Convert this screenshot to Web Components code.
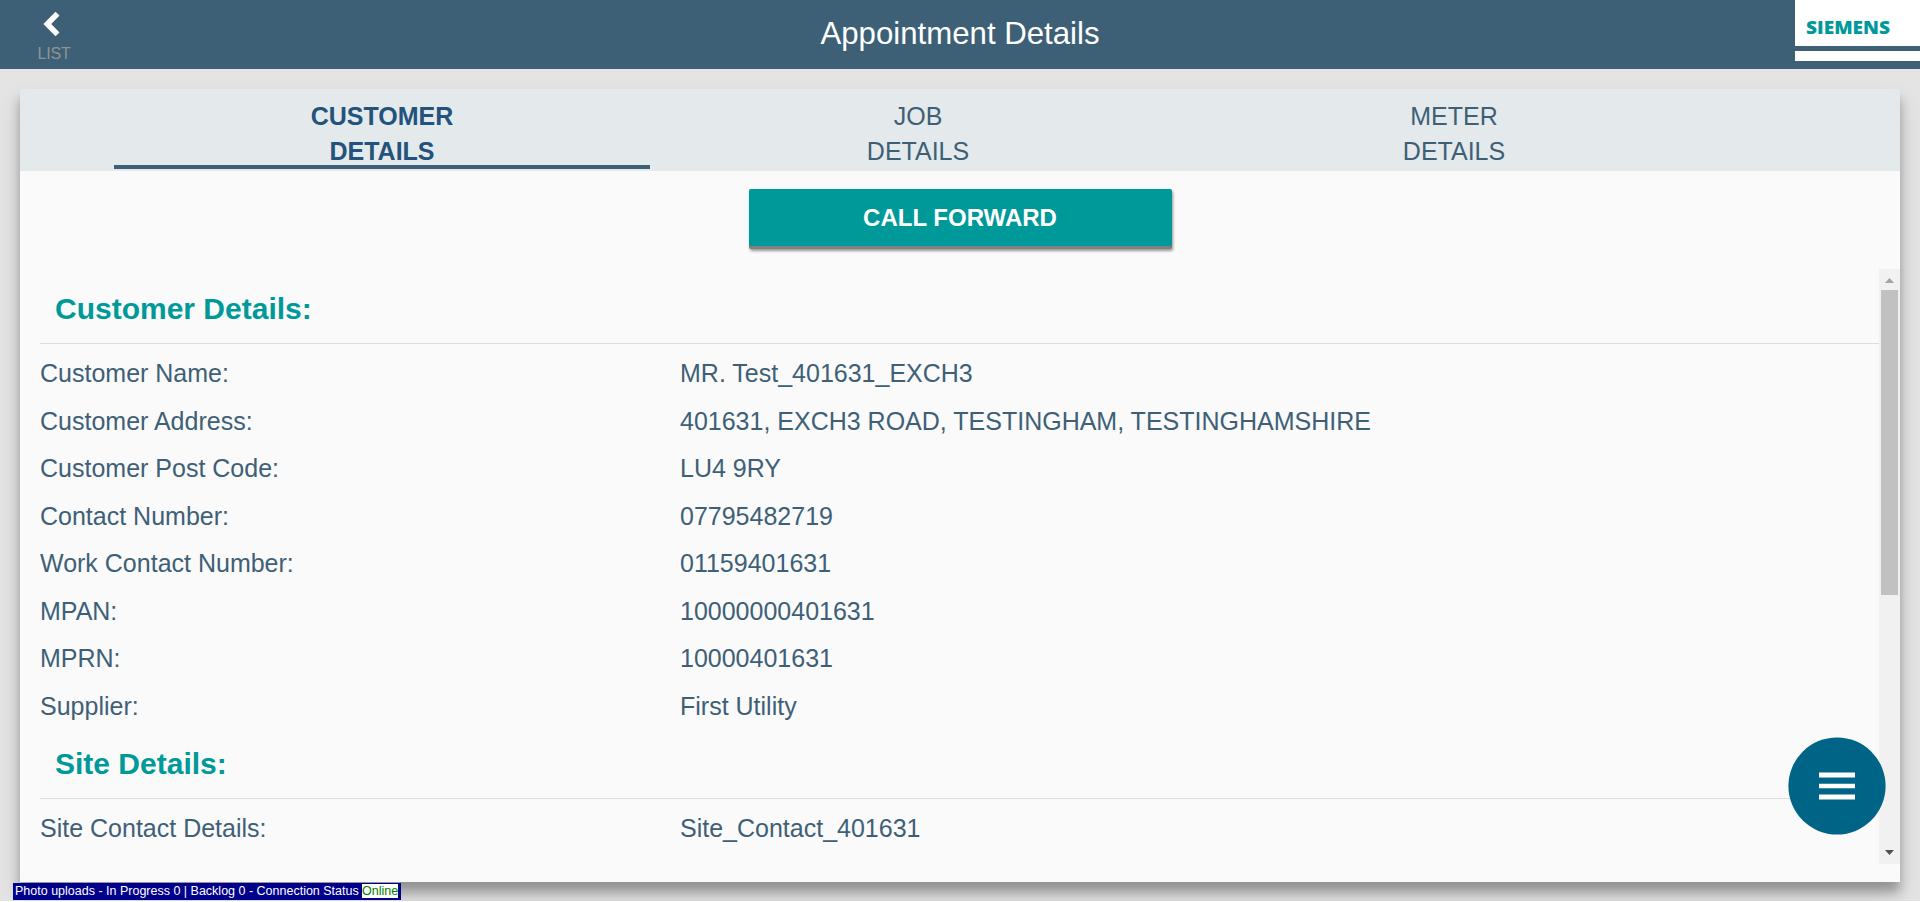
<!DOCTYPE html>
<html lang="en">
<head>
<meta charset="utf-8">
<title>Appointment Details</title>
<style>
html,body{margin:0;height:100%;overflow:hidden}
body{font-family:"Liberation Sans",Arial,sans-serif;color:#3e6077;background:#fff}
</style>
</head>
<body>
<appointment-page></appointment-page>
<script>
function define(name, html) {
  const t = document.createElement('template');
  t.innerHTML = html;
  customElements.define(name, class extends HTMLElement {
    constructor() {
      super();
      this.attachShadow({ mode: 'open' }).appendChild(t.content.cloneNode(true));
    }
  });
}

define('brand-logo', `
<style>
:host{display:flex;flex-direction:column;width:125px;height:61px}
.name{box-sizing:border-box;height:46px;background:#fff;padding:8px 0 0 11px;color:#099;line-height:38px}
svg{display:block;overflow:visible}
text{font:800 17.5px "Open Sans","Noto Sans",sans-serif;fill:#099}
.bar{margin-top:5px;height:10px;background:#fff}
</style>
<div class="name"><svg width="84" height="30"><text x="0" y="25.6" textLength="84" lengthAdjust="spacingAndGlyphs">SIEMENS</text></svg></div>
<div class="bar"></div>`);

define('app-header', `
<style>
:host{display:grid;grid-template-columns:1fr auto 1fr;height:69px;background:#3e6077;color:#fff}
.back{width:108px;display:flex;flex-direction:column;align-items:center}
.back svg{display:block;margin-top:11px;margin-right:4px}
.back span{font-size:16px;line-height:20px;margin-top:7px;color:#8e9492;letter-spacing:-.2px}
h1{margin:0;font-size:31.2px;font-weight:400;line-height:68px}
brand-logo{justify-self:end}
</style>
<div class="back"><svg width="18" height="26" viewBox="0 0 18 26"><path d="M14.5 2.6 L4.3 13 L14.5 23.4" fill="none" stroke="#fff" stroke-width="5.6"/></svg><span>LIST</span></div>
<h1><slot></slot></h1>
<brand-logo></brand-logo>`);

define('tab-item', `
<style>
:host{display:block;box-sizing:border-box;width:536px;height:80px;padding-top:10px;text-align:center;font-size:25px;line-height:35px;border-bottom:4px solid transparent}
:host([selected]){font-weight:700;color:#23527c;border-bottom-color:#3e6077}
</style><slot></slot>`);

define('tab-bar', `
<style>:host{display:flex;box-sizing:border-box;height:82px;padding-left:94px;background:#e4eaec}</style><slot></slot>`);

define('action-button', `
<style>
:host{display:block;width:423px;height:60px;box-sizing:border-box}
button{display:block;width:100%;height:60px;box-sizing:border-box;border:0;border-bottom:3px solid #808080;border-radius:2px;background:#099;color:#fff;font:700 24px/57px "Liberation Sans",Arial,sans-serif;padding:0;box-shadow:1px 2px 3px rgba(0,0,0,.4)}
</style><button><slot></slot></button>`);

define('detail-section', `
<style>
:host{display:block;padding-left:20px}
h2{margin:0;box-sizing:border-box;height:75px;padding-left:15px;border-bottom:1px solid #ddd;color:#099;font-size:30px;line-height:80px}
.rows{padding:6px 0 0}
:host(:not(:first-of-type)) h2{height:68px;line-height:66px}
</style><h2><slot name="title"></slot></h2><div class="rows"><slot></slot></div>`);

define('detail-row', `
<style>
:host{display:grid;grid-template-columns:640px 1fr;height:47.57px;font-size:25px;line-height:47px}
</style><slot name="label"></slot><slot></slot>`);

define('scroll-bar', `
<style>
:host{display:flex;flex-direction:column;align-items:center;width:21px;height:595px;background:#f1f1f1}
svg{display:block;width:21px;height:21px;flex:none}
.track{flex:1}
.thumb{width:17px;height:305px;background:#c1c1c1}
</style>
<svg><path d="M10.5 9 L15 14 H6 Z" fill="#a3a3a3"/></svg>
<div class="track"><div class="thumb"></div></div>
<svg><path d="M10.5 12 L15 7 H6 Z" fill="#505050"/></svg>`);

define('details-card', `
<style>
:host{display:flex;flex-direction:column;margin:20px 20px 0;height:793px;background:#fafafa;box-shadow:0 10px 10px rgba(0,0,0,.28),0 14px 24px rgba(0,0,0,.12)}
.action{display:flex;justify-content:center;padding-top:18px;box-sizing:border-box;height:98px}
.body{display:flex;height:595px}
.content{flex:1;overflow:hidden}
</style>
<slot name="tabs"></slot>
<div class="action"><slot name="action"></slot></div>
<div class="body"><div class="content"><slot></slot></div><scroll-bar></scroll-bar></div>`);

define('menu-button', `
<style>
:host{position:absolute;right:34px;bottom:66px;width:98px;height:98px}
svg{display:block}
</style>
<svg width="98" height="98"><circle cx="49" cy="49" r="48.6" fill="#006487"/><path d="M31 35.5h36v5H31zM31 46.7h36v4.6H31zM31 57.6h36v5H31z" fill="#fff"/></svg>`);

define('upload-status', `
<style>
:host{position:absolute;left:13px;top:883px;display:flex;align-items:flex-start;box-sizing:border-box;width:388px;height:17px;padding:1px 0 0 2px;background:#00008b;color:#fff;font-size:12.5px;white-space:pre;line-height:14px}
.text{width:347px}
b{font-weight:400;background:#fff;color:#008000;width:36px}
</style><span class="text">Photo uploads - In Progress 0 | Backlog 0 - Connection Status </span><b>Online</b>`);

define('appointment-page', `
<style>:host{display:block;position:relative;height:901px;overflow:hidden;background:#e4e4e4}
app-header{position:relative;z-index:1}</style>
<app-header>Appointment Details</app-header>
<details-card>
  <tab-bar slot="tabs"><tab-item selected>CUSTOMER<br>DETAILS</tab-item><tab-item>JOB<br>DETAILS</tab-item><tab-item>METER<br>DETAILS</tab-item></tab-bar>
  <action-button slot="action">CALL FORWARD</action-button>
  <detail-section><span slot="title">Customer Details:</span>
    <detail-row><span slot="label">Customer Name:</span><span>MR. Test_401631_EXCH3</span></detail-row>
    <detail-row><span slot="label">Customer Address:</span><span>401631, EXCH3 ROAD, TESTINGHAM, TESTINGHAMSHIRE</span></detail-row>
    <detail-row><span slot="label">Customer Post Code:</span><span>LU4 9RY</span></detail-row>
    <detail-row><span slot="label">Contact Number:</span><span>07795482719</span></detail-row>
    <detail-row><span slot="label">Work Contact Number:</span><span>01159401631</span></detail-row>
    <detail-row><span slot="label">MPAN:</span><span>10000000401631</span></detail-row>
    <detail-row><span slot="label">MPRN:</span><span>10000401631</span></detail-row>
    <detail-row><span slot="label">Supplier:</span><span>First Utility</span></detail-row>
  </detail-section>
  <detail-section><span slot="title">Site Details:</span>
    <detail-row><span slot="label">Site Contact Details:</span><span>Site_Contact_401631</span></detail-row>
  </detail-section>
</details-card>
<menu-button></menu-button>
<upload-status></upload-status>`);
</script>
</body>
</html>
